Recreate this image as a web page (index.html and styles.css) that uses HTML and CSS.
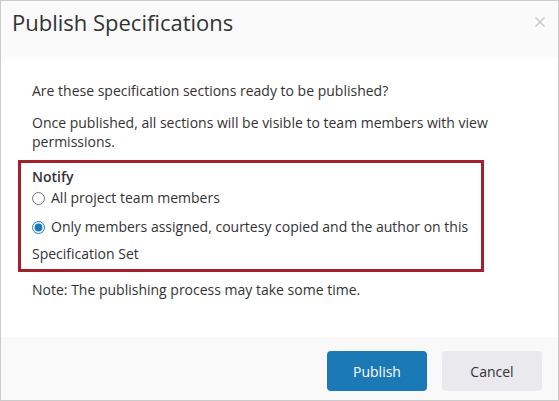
FILE: index.html
```html
<!DOCTYPE html>
<html lang="en">
<head>
    <meta charset="UTF-8">
    <meta name="viewport" content="width=device-width, initial-scale=1.0">
    <title>Publish Specifications</title>
    <link rel="stylesheet" href="styles.css">
</head>
<body>
    <div class="modal">
        <div class="modal-header">
            <h2>Publish Specifications</h2>
            <button class="close" type="button" aria-label="Close">
                <svg width="10" height="10" viewBox="0 0 10 10">
                    <path d="M0.5 0.5 L9.5 9.5 M9.5 0.5 L0.5 9.5" stroke="#c6c6c6" stroke-width="1.4" fill="none"/>
                </svg>
            </button>
        </div>
        <div class="modal-body">
            <p>Are these specification sections ready to be published?</p>
            <p>Once published, all sections will be visible to team members with view permissions.</p>
            <div class="notify">
                <div class="notify-title">Notify</div>
                <label class="option first">
                    <input type="radio" name="notify">All project team members
                </label>
                <label class="option">
                    <input type="radio" name="notify" checked>Only members assigned, courtesy copied and the author on this Specification Set
                </label>
            </div>
            <p class="note">Note: The publishing process may take some time.</p>
        </div>
        <div class="modal-footer">
            <button class="btn btn-primary" type="button">Publish</button>
            <button class="btn btn-secondary" type="button">Cancel</button>
        </div>
    </div>
</body>
</html>
```

FILE: styles.css
```css
* {
    margin: 0;
    padding: 0;
    box-sizing: border-box;
    font-family: "Open Sans", Arial, sans-serif;
}

body {
    background-color: #fff;
    color: #333;
}

.modal {
    width: 559px;
    height: 401px;
    border: 1px solid #cbcbcb;
    display: flex;
    flex-direction: column;
    background-color: #fff;
}

.modal-header {
    height: 56px;
    padding: 0 12px 15px 11px;
    background-color: #fafafa;
    display: flex;
    align-items: center;
    justify-content: space-between;
}

.modal-header h2 {
    font-size: 22px;
    font-weight: 400;
    color: #333;
    line-height: 28px;
}

.close {
    border: none;
    background: none;
    width: 12px;
    height: 12px;
    display: flex;
    align-items: center;
    justify-content: center;
    cursor: pointer;
}

.modal-body {
    flex: 1;
    padding: 24px 31px 0 31px;
    font-size: 14px;
    line-height: 19px;
}

.modal-body p {
    margin-bottom: 13px;
}

.notify {
    width: 466px;
    margin: -4px 0 0 -14px;
    padding: 4px 11px 2px 11px;
    border: 3px solid #a31f2b;
}

.notify-title {
    font-weight: 600;
    line-height: 19px;
}

.option {
    display: block;
    line-height: 27px;
    margin-top: 3px;
}

.option.first {
    line-height: 24px;
    margin-top: 0;
}

.option input {
    width: 13px;
    height: 13px;
    margin: 0 6px 0 0;
    vertical-align: -2px;
    accent-color: #1c7ac0;
}

.modal-body p.note {
    margin-top: 8px;
}

.modal-footer {
    height: 63px;
    background-color: #f9f9f9;
    display: flex;
    justify-content: flex-end;
    align-items: flex-start;
    gap: 15px;
    padding: 14px 16px 0 0;
}

.btn {
    width: 100px;
    height: 40px;
    border: none;
    border-radius: 4px;
    font-size: 14px;
    cursor: pointer;
}

.btn-primary {
    background-color: #1b7ab5;
    color: #fff;
}

.btn-secondary {
    background-color: #e9e9ee;
    color: #333;
}
```
